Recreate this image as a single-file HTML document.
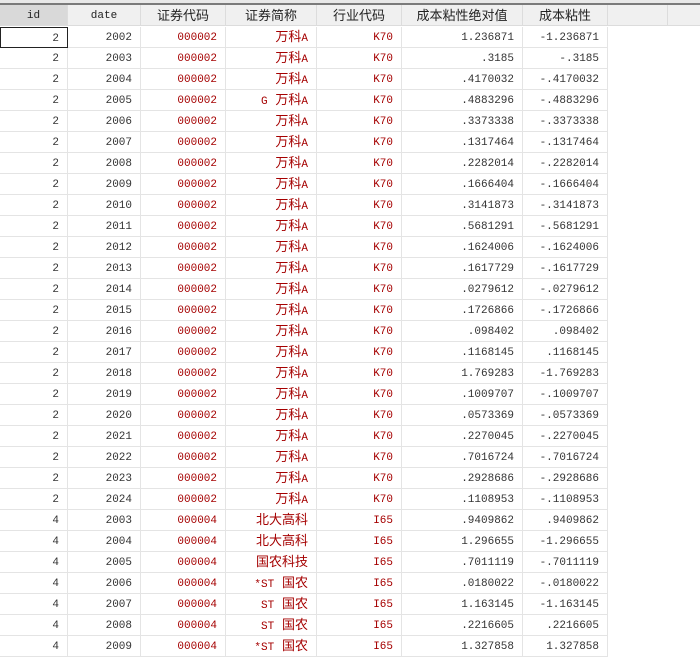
<!DOCTYPE html>
<html><head><meta charset="utf-8"><style>
body{margin:0;width:700px;height:653px;overflow:hidden;background:#fff;position:relative;font-family:"Liberation Mono",monospace;}
.top{position:absolute;left:0;top:0;width:700px;height:3px;background:#e8e8e8;}
.top2{position:absolute;left:0;top:3px;width:700px;height:2px;background:#7a7a7a;}
.hdr{position:absolute;top:5px;height:21px;background:#f0f0f0;border-right:1px solid #dcdcdc;border-bottom:1px solid #dcdcdc;box-sizing:border-box;text-align:center;line-height:21px;font-size:13px;color:#222;font-family:"Liberation Sans","Noto Sans CJK SC",sans-serif;}
.hdr.m{font-family:"Liberation Mono",monospace;font-size:11px;line-height:22px;}
.row{position:absolute;left:0;width:700px;height:21px;}
.c{position:absolute;top:0;height:21px;box-sizing:border-box;border-right:1px solid #e4e4e4;border-bottom:1px solid #e4e4e4;text-align:right;padding-right:8px;line-height:22px;font-size:11px;color:#333;white-space:nowrap;}
.r{color:#a50000;}
.cn{font-family:"Liberation Mono","Noto Sans CJK SC",monospace;font-size:13px;line-height:21px;}
.cn b{font-weight:normal;font-size:11px;font-family:"Liberation Mono",monospace;}
.sel{border:1px solid #222;}
</style></head><body>
<div class="top"></div><div class="top2"></div>
<div class="hdr m" style="left:0;width:68px;background:#d9d9d9">id</div>
<div class="hdr m" style="left:68px;width:73px">date</div>
<div class="hdr" style="left:141px;width:85px">证券代码</div>
<div class="hdr" style="left:226px;width:91px">证券简称</div>
<div class="hdr" style="left:317px;width:85px">行业代码</div>
<div class="hdr" style="left:402px;width:121px">成本粘性绝对值</div>
<div class="hdr" style="left:523px;width:85px">成本粘性</div>
<div class="hdr" style="left:608px;width:60px"></div>
<div class="hdr" style="left:668px;width:32px;border-right:none"></div>
<div id="rows"></div>
<script>
var d=[
[2,2002,"000002","万科<b>A</b>","K70","1.236871","-1.236871"],
[2,2003,"000002","万科<b>A</b>","K70",".3185","-.3185"],
[2,2004,"000002","万科<b>A</b>","K70",".4170032","-.4170032"],
[2,2005,"000002","<b>G</b> 万科<b>A</b>","K70",".4883296","-.4883296"],
[2,2006,"000002","万科<b>A</b>","K70",".3373338","-.3373338"],
[2,2007,"000002","万科<b>A</b>","K70",".1317464","-.1317464"],
[2,2008,"000002","万科<b>A</b>","K70",".2282014","-.2282014"],
[2,2009,"000002","万科<b>A</b>","K70",".1666404","-.1666404"],
[2,2010,"000002","万科<b>A</b>","K70",".3141873","-.3141873"],
[2,2011,"000002","万科<b>A</b>","K70",".5681291","-.5681291"],
[2,2012,"000002","万科<b>A</b>","K70",".1624006","-.1624006"],
[2,2013,"000002","万科<b>A</b>","K70",".1617729","-.1617729"],
[2,2014,"000002","万科<b>A</b>","K70",".0279612","-.0279612"],
[2,2015,"000002","万科<b>A</b>","K70",".1726866","-.1726866"],
[2,2016,"000002","万科<b>A</b>","K70",".098402",".098402"],
[2,2017,"000002","万科<b>A</b>","K70",".1168145",".1168145"],
[2,2018,"000002","万科<b>A</b>","K70","1.769283","-1.769283"],
[2,2019,"000002","万科<b>A</b>","K70",".1009707","-.1009707"],
[2,2020,"000002","万科<b>A</b>","K70",".0573369","-.0573369"],
[2,2021,"000002","万科<b>A</b>","K70",".2270045","-.2270045"],
[2,2022,"000002","万科<b>A</b>","K70",".7016724","-.7016724"],
[2,2023,"000002","万科<b>A</b>","K70",".2928686","-.2928686"],
[2,2024,"000002","万科<b>A</b>","K70",".1108953","-.1108953"],
[4,2003,"000004","北大高科","I65",".9409862",".9409862"],
[4,2004,"000004","北大高科","I65","1.296655","-1.296655"],
[4,2005,"000004","国农科技","I65",".7011119","-.7011119"],
[4,2006,"000004","<b>*ST</b> 国农","I65",".0180022","-.0180022"],
[4,2007,"000004","<b>ST</b> 国农","I65","1.163145","-1.163145"],
[4,2008,"000004","<b>ST</b> 国农","I65",".2216605",".2216605"],
[4,2009,"000004","<b>*ST</b> 国农","I65","1.327858","1.327858"]];
var h="";
d.forEach(function(r,i){
h+='<div class="row" style="top:'+(27+i*21)+'px">'+
'<div class="c'+(i==0?' sel':'')+'" style="left:0;width:68px">'+r[0]+'</div>'+
'<div class="c" style="left:68px;width:73px">'+r[1]+'</div>'+
'<div class="c r" style="left:141px;width:85px">'+r[2]+'</div>'+
'<div class="c r cn" style="left:226px;width:91px">'+r[3]+'</div>'+
'<div class="c r" style="left:317px;width:85px">'+r[4]+'</div>'+
'<div class="c" style="left:402px;width:121px">'+r[5]+'</div>'+
'<div class="c" style="left:523px;width:85px">'+r[6]+'</div>'+
'</div>';});
document.getElementById("rows").innerHTML=h;
</script>
</body></html>
